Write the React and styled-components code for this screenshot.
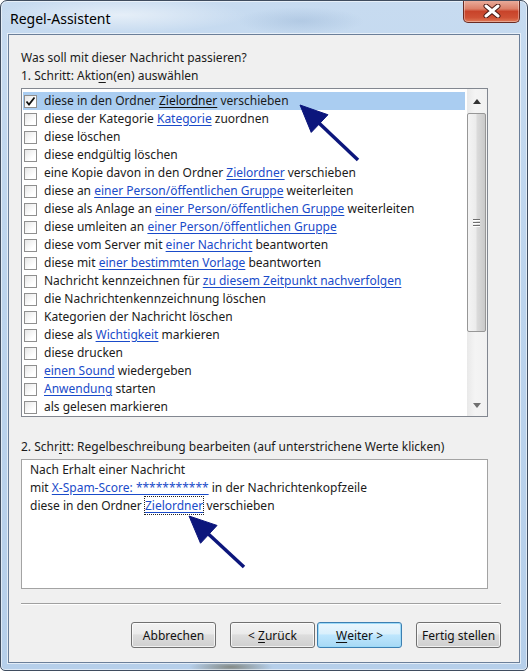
import styled, { createGlobalStyle } from "styled-components"

const GlobalStyle = createGlobalStyle`
    html, body {
        margin: 0;
        padding: 0;
        background: #ffffff;
    }
    body {
        font-family: "Noto Sans", "Open Sans", sans-serif;
        font-size: 12px;
        color: #1b1b1b;
    }
`;

const Frame = styled.div`
    position: relative;
    box-sizing: border-box;
    width: 528px;
    height: 671px;
    display: flex;
    flex-direction: column;
    border: 1px solid #3f4c5e;
    border-radius: 7px 7px 5px 5px;
    overflow: hidden;
    background:
        radial-gradient(ellipse 180px 26px at 120px 14px, rgba(255,255,255,0.55), rgba(255,255,255,0) 70%),
        radial-gradient(ellipse 90px 20px at 300px 20px, rgba(140,170,205,0.35), rgba(140,170,205,0) 70%),
        radial-gradient(ellipse 60px 10px at 230px 666px, rgba(90,80,50,0.55), rgba(90,80,50,0) 70%),
        linear-gradient(180deg, #c7dbf0 0%, #bcd4ed 45%, #b6cfea 100%);
    box-shadow: inset 0 0 0 1px rgba(255,255,255,0.55);
`;

const TitleBar = styled.div`
    height: 33px;
    flex: none;
    display: flex;
    justify-content: space-between;
    align-items: flex-start;
    padding-left: 9px;
    padding-right: 7px;
`;

const Title = styled.div`
    font-size: 14px;
    line-height: 18px;
    padding-top: 9px;
    color: #000;
`;

const CloseButton = styled.div`
    width: 57px;
    height: 23px;
    margin-top: -1px;
    box-sizing: border-box;
    display: flex;
    align-items: center;
    justify-content: center;
    border: 1px solid #6a2b22;
    border-top: none;
    border-radius: 0 0 5px 5px;
    background: linear-gradient(180deg, #eab0a0 0%, #dc8069 40%, #c8432a 52%, #cf5135 80%, #e07a58 100%);
    box-shadow: inset 0 0 0 1px rgba(255,255,255,0.35);
`;

const Client = styled.div`
    flex: 1;
    margin: 0 7px 7px 7px;
    box-sizing: border-box;
    border: 1px solid #6b7f99;
    box-shadow: 0 0 0 1px rgba(255,255,255,0.6);
    background: #f0f0f0;
    padding: 14px 18px 0 12px;
    display: flex;
    flex-direction: column;
`;

const Line = styled.div`
    height: 18px;
    line-height: 18px;
    white-space: nowrap;
    margin-top: ${(p) => p.$top || 0}px;
`;

const ListBox = styled.div`
    margin-top: 3px;
    width: 467px;
    height: 329px;
    box-sizing: border-box;
    border: 1px solid #828790;
    background: #fff;
    display: flex;
`;

const Rows = styled.div`
    flex: 1;
    padding-top: 3px;
    padding-left: 1px;
    padding-right: 2px;
`;

const Row = styled.div`
    height: 18px;
    display: flex;
    align-items: center;
    gap: 7px;
    padding-left: 1px;
    white-space: nowrap;
    line-height: 18px;
    background: ${(p) => (p.$selected ? "#aacdf1" : "transparent")};
`;

const Check = styled.div`
    width: 13px;
    height: 13px;
    flex: none;
    box-sizing: border-box;
    border: 1px solid #8f8f8f;
    background: linear-gradient(135deg, #e6e6e6 0%, #ffffff 70%);
    display: flex;
    align-items: center;
    justify-content: center;
`;

const Link = styled.span`
    color: ${(p) => (p.$plain ? "#111" : "#1a4bc9")};
    text-decoration: underline;
    text-underline-offset: 2px;
    outline: ${(p) => (p.$focus ? "1px dotted #222" : "none")};
    outline-offset: 0px;
`;

const Key = styled.span`
    text-decoration: underline;
    text-underline-offset: 2px;
`;

const ScrollBar = styled.div`
    width: 20px;
    flex: none;
    display: flex;
    flex-direction: column;
    background: linear-gradient(90deg, #e9e9e9 0%, #f4f4f4 40%, #f1f1f1 100%);
`;

const ArrowButton = styled.div`
    height: ${(p) => p.$h}px;
    flex: none;
    display: flex;
    align-items: center;
    justify-content: center;
`;

const Track = styled.div`
    flex: 1;
    display: flex;
    flex-direction: column;
`;

const Thumb = styled.div`
    height: 219px;
    margin: 0 1px 0 0;
    box-sizing: border-box;
    border: 1px solid #979797;
    border-radius: 2px;
    background: linear-gradient(90deg, #f4f4f4 0%, #ececec 45%, #dadada 55%, #c9c9c9 100%);
    display: flex;
    flex-direction: column;
    align-items: center;
    justify-content: center;
    gap: 2px;
`;

const Grip = styled.div`
    width: 7px;
    height: 1px;
    background: #6e6e6e;
    box-shadow: 0 1px 0 #fff;
`;

const DescBox = styled.div`
    margin-top: 3px;
    width: 467px;
    height: 130px;
    box-sizing: border-box;
    border: 1px solid #a3a3a3;
    background: #fff;
    padding: 1px 8px;
`;

const Separator = styled.div`
    margin-top: 14px;
    height: 0;
    border-top: 1px solid #a0a0a0;
    border-bottom: 1px solid #ffffff;
`;

const ButtonRow = styled.div`
    margin-top: 17px;
    display: flex;
    justify-content: flex-end;
`;

const Button = styled.div`
    width: 85px;
    height: 26px;
    box-sizing: border-box;
    margin-left: ${(p) => p.$gap || 0}px;
    display: flex;
    align-items: center;
    justify-content: center;
    white-space: pre;
    font-size: 12px;
    color: #111;
    border: 1px solid ${(p) => (p.$default ? "#3c7fb1" : "#707070")};
    border-radius: 3px;
    background: ${(p) =>
        p.$default
            ? "linear-gradient(180deg, #eaf6fd 0%, #d9f0fc 45%, #bee6fd 50%, #a7d9f5 100%)"
            : "linear-gradient(180deg, #f2f2f2 0%, #ebebeb 45%, #dddddd 50%, #cfcfcf 100%)"};
    box-shadow: inset 0 0 0 1px ${(p) => (p.$default ? "#9ddaf8" : "rgba(255,255,255,0.7)")};
`;

const Overlay = styled.svg`
    position: absolute;
    left: 0;
    top: 0;
    pointer-events: none;
`;

const rows = [
    ["diese in den Ordner ", { l: "Zielordner" }, " verschieben"],
    ["diese der Kategorie ", { l: "Kategorie" }, " zuordnen"],
    ["diese löschen"],
    ["diese endgültig löschen"],
    ["eine Kopie davon in den Ordner ", { l: "Zielordner" }, " verschieben"],
    ["diese an ", { l: "einer Person/öffentlichen Gruppe" }, " weiterleiten"],
    ["diese als Anlage an ", { l: "einer Person/öffentlichen Gruppe" }, " weiterleiten"],
    ["diese umleiten an ", { l: "einer Person/öffentlichen Gruppe" }],
    ["diese vom Server mit ", { l: "einer Nachricht" }, " beantworten"],
    ["diese mit ", { l: "einer bestimmten Vorlage" }, " beantworten"],
    ["Nachricht kennzeichnen für ", { l: "zu diesem Zeitpunkt nachverfolgen" }],
    ["die Nachrichtenkennzeichnung löschen"],
    ["Kategorien der Nachricht löschen"],
    ["diese als ", { l: "Wichtigkeit" }, " markieren"],
    ["diese drucken"],
    [{ l: "einen Sound" }, " wiedergeben"],
    [{ l: "Anwendung" }, " starten"],
    ["als gelesen markieren"],
];

const Tick = () => (
    <svg width="11" height="11" viewBox="0 0 11 11">
        <path d="M1.5 5.5 L4 8.5 L9.5 1.5" fill="none" stroke="#111" strokeWidth="1.8" />
    </svg>
);

const Tri = ({ down }) => (
    <svg width="8" height="5" viewBox="0 0 8 5">
        <path d={down ? "M0 0 H8 L4 5 Z" : "M0 5 H8 L4 0 Z"} fill={down ? "#707070" : "#333"} />
    </svg>
);

const Arrow = ({ tip, tail, head }) => {
    const dx = tip[0] - tail[0];
    const dy = tip[1] - tail[1];
    const len = Math.hypot(dx, dy);
    const ux = dx / len;
    const uy = dy / len;
    const bx = tip[0] - ux * head;
    const by = tip[1] - uy * head;
    const w = head * 0.45;
    const p1 = [bx - uy * w, by + ux * w];
    const p2 = [bx + uy * w, by - ux * w];
    return (
        <g fill="#0c167c" stroke="#0c167c">
            <line x1={tail[0]} y1={tail[1]} x2={bx + ux * 2} y2={by + uy * 2} strokeWidth="3.5" />
            <polygon points={`${tip.join(",")} ${p1.join(",")} ${p2.join(",")}`} strokeWidth="1" />
        </g>
    );
};

const App = () => {
    return (
        <>
            <GlobalStyle />
            <Frame>
                <TitleBar>
                    <Title>Regel-Assistent</Title>
                    <CloseButton>
                        <svg width="18" height="14" viewBox="0 0 18 14">
                            <path d="M3 2 L15 12 M15 2 L3 12" stroke="#4a1a14" strokeWidth="5" strokeLinecap="round" />
                            <path d="M3 2 L15 12 M15 2 L3 12" stroke="#fff" strokeWidth="3" strokeLinecap="round" />
                        </svg>
                    </CloseButton>
                </TitleBar>
                <Client>
                    <Line>Was soll mit dieser Nachricht passieren?</Line>
                    <Line>1. Schritt: Akti<Key>o</Key>n(en) auswählen</Line>
                    <ListBox>
                        <Rows>
                            {rows.map((parts, i) => (
                                <Row key={i} $selected={i === 0}>
                                    <Check>{i === 0 && <Tick />}</Check>
                                    <span>
                                        {parts.map((p, j) =>
                                            typeof p === "string" ? (
                                                <span key={j}>{p}</span>
                                            ) : (
                                                <Link key={j} $plain={i === 0}>{p.l}</Link>
                                            )
                                        )}
                                    </span>
                                </Row>
                            ))}
                        </Rows>
                        <ScrollBar>
                            <ArrowButton $h={24}><Tri /></ArrowButton>
                            <Track>
                                <Thumb>
                                    <Grip />
                                    <Grip />
                                    <Grip />
                                </Thumb>
                            </Track>
                            <ArrowButton $h={22}><Tri down /></ArrowButton>
                        </ScrollBar>
                    </ListBox>
                    <Line $top={21}>2. Schr<Key>i</Key>tt: Regelbeschreibung bearbeiten (auf unterstrichene Werte klicken)</Line>
                    <DescBox>
                        <Line>Nach Erhalt einer Nachricht</Line>
                        <Line>mit <Link>X-Spam-Score: ***********</Link> in der Nachrichtenkopfzeile</Line>
                        <Line>diese in den Ordner <Link $focus>Zielordner</Link> verschieben</Line>
                    </DescBox>
                    <Separator />
                    <ButtonRow>
                        <Button>Abbrechen</Button>
                        <Button $gap={14}>{"< "}<Key>Z</Key>urück</Button>
                        <Button $gap={2} $default><Key>W</Key>eiter &gt;</Button>
                        <Button $gap={14}>Fertig stellen</Button>
                    </ButtonRow>
                </Client>
                <Overlay width="528" height="671" viewBox="0 0 528 671">
                    <Arrow tip={[299, 104]} tail={[357, 159]} head={27} />
                    <Arrow tip={[188, 515]} tail={[243, 566]} head={27} />
                </Overlay>
            </Frame>
        </>
    )
}

export default App
